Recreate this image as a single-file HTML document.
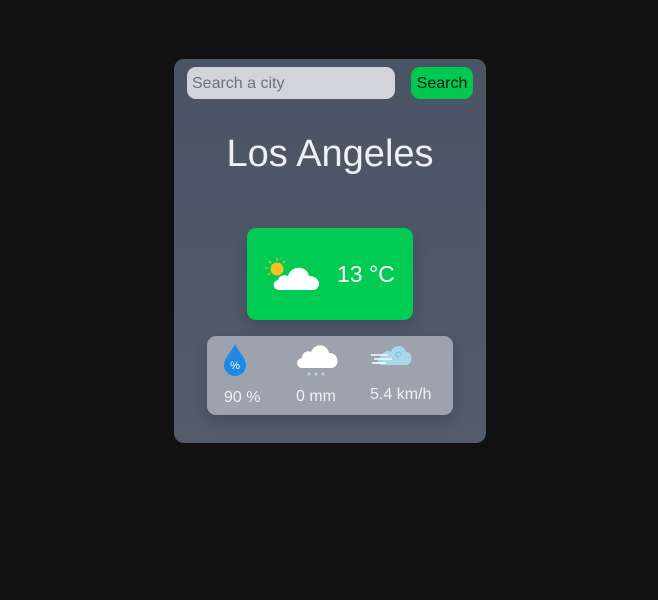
<!DOCTYPE html>
<html><head><meta charset="utf-8"><style>
*{box-sizing:border-box;margin:0;padding:0}
body{width:658px;height:600px;background:#111111;font-family:"Liberation Sans",sans-serif;position:relative;overflow:hidden}
.card{position:absolute;left:174px;top:59px;width:312px;height:384px;border-radius:10px;background:linear-gradient(#4a5464,#515b69)}
.inp{position:absolute;left:13px;top:8px;width:208px;height:32px;border-radius:9px;background:#d1d5db;color:#6b7280;font-size:16px;line-height:34px;padding-left:5px}
.btn{position:absolute;left:237px;top:8px;width:62px;height:32px;border-radius:9px;background:#00c850;color:#0a1a10;font-size:16px;line-height:34px;text-align:center}
.city{position:absolute;left:0;width:312px;top:73px;text-align:center;color:#eef0f3;font-size:38px;line-height:44px}
.main{position:absolute;left:73px;top:169px;width:166px;height:92px;border-radius:9px;background:#00cb52;box-shadow:0 6px 14px rgba(0,0,0,.15)}
.temp{position:absolute;left:90px;top:31px;color:#fff;font-size:23px;line-height:30px}
.stats{position:absolute;left:33px;top:277px;width:246px;height:79px;border-radius:9px;background:#9ca3af;box-shadow:0 6px 14px rgba(0,0,0,.15)}
.lbl{position:absolute;color:#eef0f3;font-size:16px;line-height:20px}
</style></head><body>
<div class="card">
<div class="inp">Search a city</div>
<div class="btn">Search</div>
<div class="city">Los Angeles</div>
<div class="main">
<svg style="position:absolute;left:16px;top:29px" width="60" height="36" viewBox="0 0 60 36">
<g stroke="#f5b914" stroke-width="1.3"><line x1="14" y1="1" x2="14" y2="4"/><line x1="6" y1="4" x2="8" y2="6"/><line x1="22" y1="4" x2="20" y2="6"/><line x1="2" y1="11" x2="5" y2="11"/><line x1="5" y1="18" x2="7" y2="16"/></g>
<circle cx="14" cy="12" r="6.5" fill="#fbbf24"/>
<path d="M17 33 C9 33 9 24 15 23 C16 19 21 17 25 19 C28 8 44 8 46 19 C53 19 57 24 56 28 C55 31 53 33 50 33 Z" fill="#fff"/>
</svg>
<div class="temp">13 °C</div>
</div>
<div class="stats">
<svg style="position:absolute;left:15px;top:7px" width="26" height="34" viewBox="0 0 26 34"><path d="M13 1 C10 8 2 15 2 22 C2 28 7 33 13 33 C19 33 24 28 24 22 C24 15 16 8 13 1Z" fill="#1e88e5"/><text x="13" y="26" font-size="11" fill="#fff" text-anchor="middle" font-family="Liberation Sans">%</text></svg>
<svg style="position:absolute;left:88px;top:6px" width="44" height="36" viewBox="0 0 44 36"><path d="M7 26 C1 26 0 17 7 16 C7 10 13 8 16 10 C19 1 32 1 34 11 C41 11 44 17 42 22 C41 24 39 26 36 26Z" fill="#fff"/><circle cx="14" cy="32" r="1.6" fill="#c0d0e4"/><circle cx="21" cy="32" r="1.6" fill="#c0d0e4"/><circle cx="28" cy="32" r="1.6" fill="#c0d0e4"/></svg>
<svg style="position:absolute;left:163px;top:7px" width="42" height="26" viewBox="0 0 42 26"><path d="M12 22 C7 22 7 14 12 13 C13 8 18 7 21 9 C23 1 34 1 36 9 C41 9 43 15 40 20 C39 21 38 22 36 22Z" fill="#a8d8e8"/><path d="M29 14 C25 14 25 9 29 9 C32 9 32 12 30 12" stroke="#7cc0d8" fill="none" stroke-width="1.3"/><g stroke="#e8f4f8" stroke-width="1.8"><line x1="1" y1="12" x2="18" y2="12"/><line x1="4" y1="16" x2="22" y2="16"/><line x1="2" y1="20" x2="16" y2="20"/></g></svg>
<div class="lbl" style="left:17px;top:52px">90 %</div>
<div class="lbl" style="left:89px;top:51px">0 mm</div>
<div class="lbl" style="left:163px;top:49px">5.4 km/h</div>
</div>
</div>
</body></html>
